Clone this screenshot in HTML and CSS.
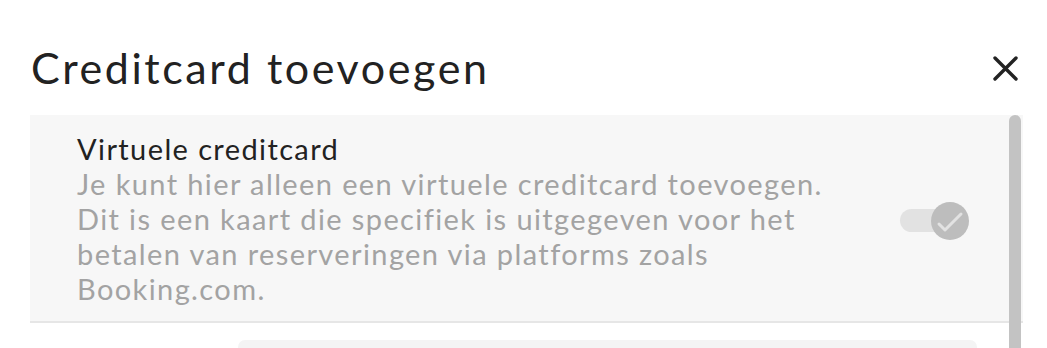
FILE: index.html
```html
<!DOCTYPE html>
<html lang="nl">
<head>
  <meta charset="UTF-8" />
  <meta name="viewport" content="width=device-width, initial-scale=1.0" />
  <title>Creditcard toevoegen</title>
  <link rel="stylesheet" href="styles.css">
</head>
<body>
  <div class="modal">
    <div class="modal-header">
      <h1 class="modal-title">Creditcard toevoegen</h1>
      <button class="close" aria-label="Sluiten">
        <svg width="25" height="25" viewBox="0 0 25 25">
          <path d="M2 2 L23 23 M23 2 L2 23" stroke="#222" stroke-width="3.4" stroke-linecap="round" fill="none" />
        </svg>
      </button>
    </div>

    <div class="modal-body">
      <div class="option">
        <div class="option-text">
          <div class="option-title">Virtuele creditcard</div>
          <p class="option-desc">Je kunt hier alleen een virtuele creditcard toevoegen. Dit is een kaart die specifiek is uitgegeven voor het betalen van reserveringen via platforms zoals Booking.com.</p>
        </div>
        <label class="toggle">
          <span class="track"></span>
          <span class="knob">
            <svg width="38" height="38" viewBox="0 0 38 38">
              <path d="M8 22 L14 28 L30 12" stroke="#e2e2e2" stroke-width="3" stroke-linecap="round" stroke-linejoin="round" fill="none" />
            </svg>
          </span>
        </label>
      </div>

      <div class="field"></div>

      <div class="scrollbar"></div>
    </div>
  </div>
</body>
</html>
```

FILE: styles.css
```css
body {
  margin: 0;
  background: #fff;
  font-family: Lato, "Open Sans", sans-serif;
  overflow: hidden;
}
.modal {
  padding: 43px 24px 0 30px;
}
.modal-header {
  display: flex;
  justify-content: space-between;
  align-items: center;
  height: 50px;
}
.modal-title {
  margin: 0;
  font-size: 43px;
  font-weight: 400;
  line-height: 50px;
  letter-spacing: 0.06em;
  color: #222;
  padding-left: 1px;
}
.close {
  width: 36px;
  height: 36px;
  padding: 0;
  border: none;
  background: none;
  display: flex;
  align-items: center;
  justify-content: center;
  cursor: pointer;
}
.modal-body {
  position: relative;
  margin-top: 22px;
  height: 300px;
}
.option {
  display: flex;
  align-items: center;
  background: #f7f7f7;
  border-bottom: 2px solid #e6e6e6;
  padding: 16px 54px 15px 47px;
}
.option-text {
  width: 780px;
  font-size: 29px;
  line-height: 35px;
  letter-spacing: 0.048em;
}
.option-title {
  color: #222;
}
.option-desc {
  margin: 0;
  color: #a3a3a3;
}
.toggle {
  position: relative;
  margin-left: auto;
  margin-top: 4px;
  width: 69px;
  height: 38px;
  display: flex;
  align-items: center;
}
.track {
  width: 60px;
  height: 23px;
  border-radius: 12px;
  background: #e2e2e2;
}
.knob {
  position: absolute;
  right: 0;
  top: 0;
  width: 38px;
  height: 38px;
  border-radius: 50%;
  background: #bdbdbd;
}
.knob svg {
  display: block;
}
.field {
  margin: 17px 46px 0 208px;
  height: 60px;
  border-radius: 7px;
  background: #f4f4f4;
}
.scrollbar {
  position: absolute;
  top: 0;
  bottom: 0;
  right: 2px;
  width: 12px;
  border-radius: 6px 6px 0 0;
  background: #c3c3c3;
}
```
